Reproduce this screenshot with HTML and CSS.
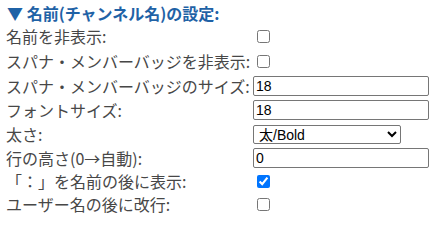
FILE: index.html
```html
<!DOCTYPE html>
<html lang="ja">
<head>
<meta charset="utf-8">
<link rel="stylesheet" href="styles.css">
</head>
<body>
<div class="panel">
  <h3 class="title">▼ 名前(チャンネル名)の設定:</h3>
  <div class="form">
    <label class="lbl">名前を非表示:</label>
    <div class="ctl"><input type="checkbox" class="cb"></div>
    <label class="lbl">スパナ・メンバーバッジを非表示:</label>
    <div class="ctl"><input type="checkbox" class="cb"></div>
    <label class="lbl">スパナ・メンバーバッジのサイズ:</label>
    <div class="ctl"><input type="text" class="txt" value="18"></div>
    <label class="lbl">フォントサイズ:</label>
    <div class="ctl"><input type="text" class="txt" value="18"></div>
    <label class="lbl">太さ:</label>
    <div class="ctl"><select class="sel"><option>太/Bold</option><option>標準/Normal</option></select></div>
    <label class="lbl">行の高さ(0→自動):</label>
    <div class="ctl"><input type="text" class="txt" value="0"></div>
    <label class="lbl">「：」を名前の後に表示:</label>
    <div class="ctl"><input type="checkbox" class="cb" checked></div>
    <label class="lbl">ユーザー名の後に改行:</label>
    <div class="ctl"><input type="checkbox" class="cb"></div>
  </div>
</div>
</body>
</html>
```

FILE: styles.css
```css
html, body {
  margin: 0;
  padding: 0;
  background: #ffffff;
}
body {
  font-family: "Noto Sans CJK JP", "Noto Sans", sans-serif;
  color: #474747;
}
.panel {
  padding: 0 0 0 6px;
}
.title {
  margin: 0;
  height: 24px;
  line-height: 26px;
  font-size: 16px;
  font-weight: bold;
  color: #1f62a6;
  padding-left: 1px;
}
.form {
  display: grid;
  grid-template-columns: 247px 190px;
  grid-template-rows: 24px 26px 24px 24px 24px 24px 22px 24px;
}
.lbl {
  font-size: 16px;
  display: flex;
  align-items: center;
  white-space: nowrap;
}
.ctl {
  display: flex;
  align-items: center;
}
.cb {
  width: 13px;
  height: 13px;
  margin: 0 0 0 4px;
}
.txt {
  box-sizing: border-box;
  width: 176px;
  height: 20px;
  margin: 0;
  padding: 1px 2px;
  border: 1px solid #767676;
  border-radius: 2px;
  font-family: "Liberation Sans", Arial, sans-serif;
  font-size: 14px;
  color: #000;
}
.sel {
  box-sizing: border-box;
  width: 148px;
  height: 19px;
  margin: 0;
  padding: 0 0 0 1px;
  border: 1px solid #767676;
  border-radius: 2px;
  font-family: "Liberation Sans", "Noto Sans CJK JP", Arial, sans-serif;
  font-size: 14px;
  color: #000;
  background: #fff;
}
```
